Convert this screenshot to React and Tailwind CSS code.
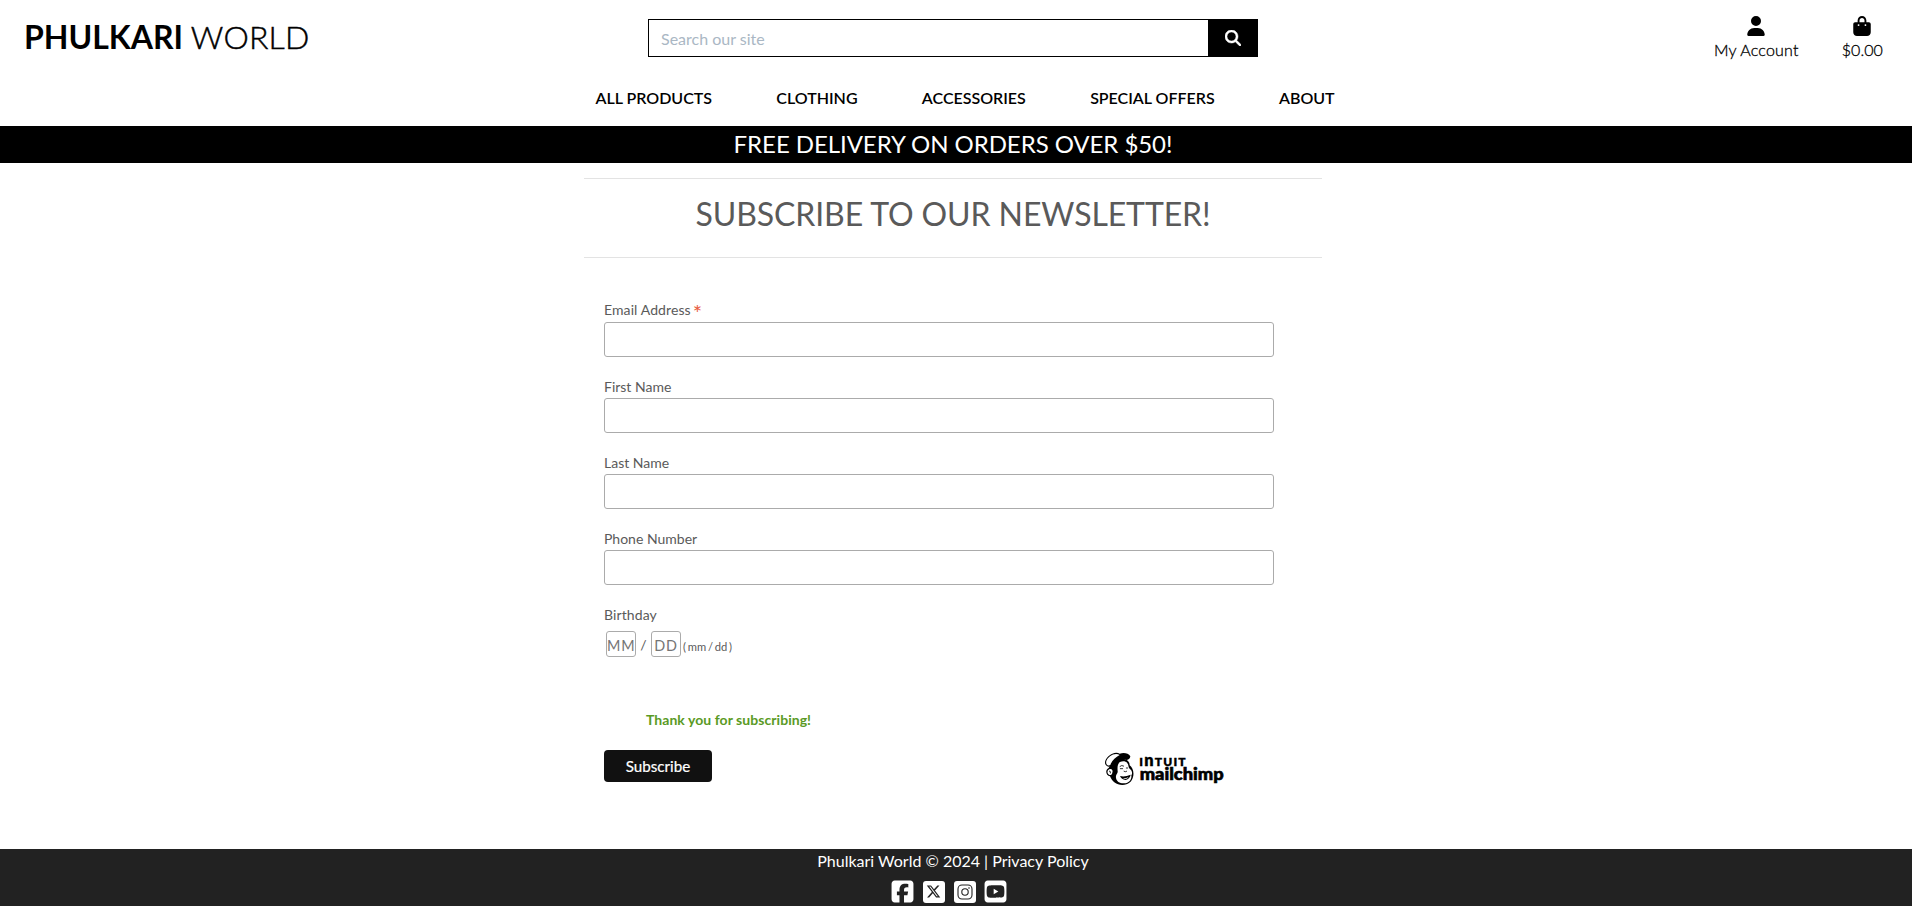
import React from "react";
import {
  FaUser,
  FaBagShopping,
  FaMagnifyingGlass,
  FaSquareFacebook,
  FaSquareYoutube,
  FaXTwitter,
} from "react-icons/fa6";

const NAV_ITEMS = ["ALL PRODUCTS", "CLOTHING", "ACCESSORIES", "SPECIAL OFFERS", "ABOUT"];
const FIELDS = ["First Name", "Last Name", "Phone Number"];

function Header() {
  return (
    <header className="h-[126px] bg-white text-black">
      <div className="grid h-[74px] grid-cols-[648px_610px_1fr] items-start">
        <a className="pt-[17px] pl-[24px] text-[32px] leading-[40px] font-light whitespace-nowrap">
          <span className="font-bold">PHULKARI</span>{" "}
          <span className="-ml-px tracking-[0.2px] [-webkit-text-stroke:0.45px_black]">WORLD</span>
        </a>
        <form className="mt-[19px] flex h-[38px]">
          <input
            type="text"
            placeholder="Search our site"
            className="w-[560px] border border-r-0 border-black bg-white px-3 pt-[3px] pb-px text-[16px] outline-none placeholder:text-[#aab7c4]"
          />
          <button type="button" className="flex w-[50px] items-center justify-center bg-black text-white">
            <FaMagnifyingGlass size={16} stroke="white" strokeWidth={16} />
          </button>
        </form>
        <div className="flex justify-end gap-[43px] pt-[16px] pr-[29px] text-[16px] leading-[24px] font-light [-webkit-text-stroke:0.3px_black]">
          <a className="flex flex-col items-center">
            <FaUser size={20} />
            <span className="mt-[2px] tracking-[0.2px]">My Account</span>
          </a>
          <a className="flex flex-col items-center">
            <FaBagShopping size={20} />
            <span className="mt-[2px] tracking-[0.1px]">$0.00</span>
          </a>
        </div>
      </div>
      <nav className="flex gap-[64.3px] pt-[12px] pl-[595.5px] text-[16px] leading-[24px] font-semibold whitespace-nowrap">
        {NAV_ITEMS.map((item) => (
          <a key={item}>{item}</a>
        ))}
      </nav>
    </header>
  );
}

function MailchimpLogo() {
  return (
    <svg width="122" height="36" viewBox="72 48 366 108" role="img" aria-label="Intuit Mailchimp">
      <path
        d="M89 94 C91 84 101 72 114 66 L140 75 C146 78 149 84 149 91 C158 98 163 112 159 126 C156 139 146 150 127 150 C109 150 96 139 90 124 C78 122 74 105 86 99 Z"
        fill="#000"
      />
      <path
        d="M76 88 C72 77 82 63 97 56 C106 52 114 53 119 56 C133 52 145 55 151 64 C150 71 147 74 140 75 C126 72 109 79 94 92 C87 99 80 94 76 88 Z"
        fill="#000"
      />
      <path d="M79 86 C76 76 86 64 99 58.5 C107 55.5 114 56.5 119 60 C107 66 95 77 91 90 C86 93 81 91 79 86 Z" fill="#fff" />
      <path
        d="M120 81 C128 77 137 78 141 83 C147 89 144 96 149 101 C157 107 158 116 154 121 C156 133 147 144 133 145 C120 146 109 139 108 128 C106 119 114 116 113 109 C112 98 112 86 120 81 Z"
        fill="#fff"
      />
      <path d="M88 103 C95 100 100 107 97 113 C96 118 92 122 87 119 C81 116 81 106 88 103 Z" fill="#fff" />
      <path d="M87 108 Q93 108 91 115" fill="none" stroke="#000" strokeWidth="2.5" />
      <path d="M120 123 Q134 127 152 119 Q150 131 137 135 Q124 134 120 123 Z" fill="#000" />
      <path d="M127 130 Q137 131 146 126 Q142 132 135 132 Q130 132 127 130 Z" fill="#fff" />
      <path
        d="M120 94 Q125 89 131 93 M121 101 L128 101 M139 99 L143 99 M132 109 Q136 112 140 109"
        fill="none"
        stroke="#000"
        strokeWidth="2.4"
        strokeLinecap="round"
      />
      <text
        x="178"
        y="92"
        fontFamily="Lato, sans-serif"
        fontSize="36"
        fontWeight="800"
        stroke="#000"
        strokeWidth="0.8"
        textLength="139"
        lengthAdjust="spacing"
      >
        I<tspan fontSize="49">n</tspan>TUIT
      </text>
      <text
        x="179"
        y="136"
        fontFamily="Lato, sans-serif"
        fontSize="49"
        fontWeight="900"
        stroke="#000"
        strokeWidth="1.8"
        textLength="252"
        lengthAdjust="spacingAndGlyphs"
      >
        mailchimp
      </text>
    </svg>
  );
}

function DateBox({ placeholder }) {
  return (
    <input
      type="text"
      placeholder={placeholder}
      className="h-[26px] w-[30px] rounded-[3px] border border-[#ababab] bg-white pt-[3px] text-center text-[14.4px] tracking-[0.8px] outline-none placeholder:text-[#757575]"
    />
  );
}

function SignupForm() {
  return (
    <form className="flex w-[670px] flex-col text-[14px] leading-[20px] text-[#5a5a5a]">
      <label className="flex h-[20px] items-start">
        <span className="tracking-[0.1px]">Email Address</span>
        <span className="ml-[2px] text-[22px] leading-[26px] text-[#e85c41]">*</span>
      </label>
      <input type="email" className="mt-[2px] h-[35px] rounded-[3px] border border-[#ababab] bg-white px-2 outline-none" />
      {FIELDS.map((name) => (
        <React.Fragment key={name}>
          <label className="mt-[20px] h-[20px]">{name}</label>
          <input type="text" className="mt-px h-[35px] rounded-[3px] border border-[#ababab] bg-white px-2 outline-none" />
        </React.Fragment>
      ))}
      <label className="mt-[20px] h-[20px] tracking-[0.1px]">Birthday</label>
      <div className="mt-[6px] flex h-[26px] items-center pl-[2px]">
        <DateBox placeholder="MM" />
        <span className="w-[15px] pt-[2px] text-center text-[14px]">/</span>
        <DateBox placeholder="DD" />
        <span className="ml-[2px] pt-[5px] text-[11.2px] tracking-[0.2px] [word-spacing:-1.6px]">( mm / dd )</span>
      </div>
      <p className="mt-[53px] pl-[42px] font-bold tracking-[0.05px] text-[#5a9a24]">Thank you for subscribing!</p>
      <div className="mt-[20px] flex h-[36px]">
        <button type="button" className="h-[32px] w-[108px] rounded-[4px] bg-[#111] text-[15.2px] text-white [-webkit-text-stroke:0.2px_white]">
          Subscribe
        </button>
        <div className="ml-[392px] pt-px">
          <MailchimpLogo />
        </div>
      </div>
    </form>
  );
}

function InstagramGlyph() {
  return (
    <svg width="16" height="16" viewBox="0 0 16 16" fill="none" stroke="#222" strokeWidth="1.1">
      <rect x="1" y="1" width="14" height="14" rx="4" />
      <circle cx="8" cy="8" r="3.2" />
      <circle cx="12" cy="4" r="0.8" fill="#222" stroke="none" />
    </svg>
  );
}

function Footer() {
  return (
    <footer className="flex h-[57px] flex-col items-center bg-[#222] pr-[6px] text-[16px] leading-[24px] text-white">
      <p>Phulkari World © 2024 | Privacy Policy</p>
      <div className="mt-[6px] flex items-center gap-[6px] pr-[8px]">
        <FaSquareFacebook size={25} />
        <span className="mx-[1.5px] flex size-[22px] items-center justify-center rounded-[3px] bg-white">
          <FaXTwitter size={15} color="#222" />
        </span>
        <span className="mx-[1.5px] flex size-[22px] items-center justify-center rounded-[3px] bg-white">
          <InstagramGlyph />
        </span>
        <FaSquareYoutube size={25} />
      </div>
    </footer>
  );
}

export default function App() {
  return (
    <div className="flex h-[906px] flex-col overflow-hidden bg-white font-['Lato',sans-serif]">
      <Header />
      <div className="h-[37px] bg-black pr-[6px] text-center text-[24px] leading-[35px] tracking-[-0.06px] text-white">
        FREE DELIVERY ON ORDERS OVER $50!
      </div>
      <main className="flex flex-1 flex-col pl-[584px]">
        <h2 className="mt-[15px] h-[80px] w-[738px] border-y border-[#e3e3e3] pt-[15px] text-center text-[32px] leading-[40px] tracking-[-0.1px] text-[#5a5a5a]">
          SUBSCRIBE TO OUR NEWSLETTER!
        </h2>
        <div className="pt-[42px] pl-[20px]">
          <SignupForm />
        </div>
      </main>
      <Footer />
    </div>
  );
}
